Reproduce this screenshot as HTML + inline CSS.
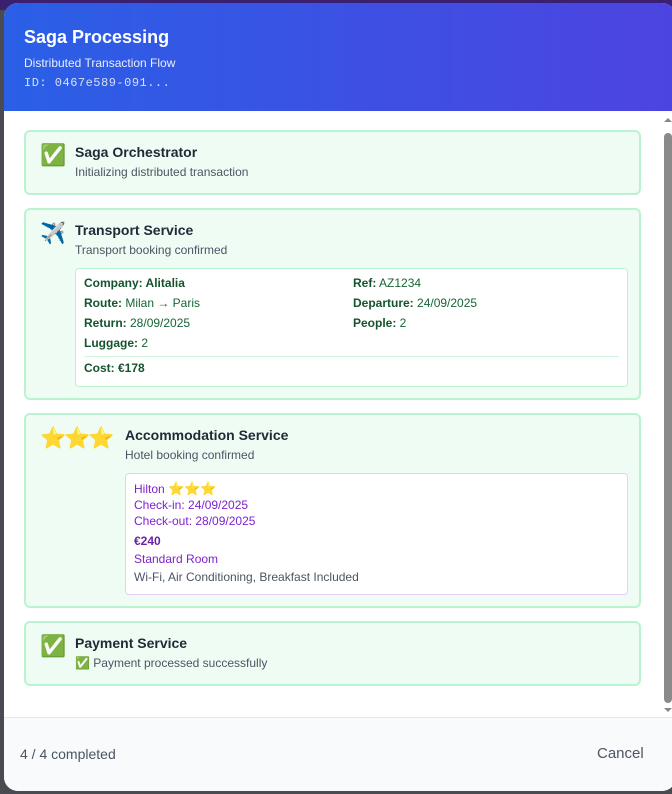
<!DOCTYPE html>
<html><head><meta charset="utf-8"><style>
*{box-sizing:border-box;margin:0;padding:0}
body{width:672px;height:794px;background:#4a4a52;font-family:"Liberation Sans",sans-serif;position:relative;overflow:hidden}
.top{position:absolute;left:0;top:0;width:672px;height:10px;background:#3b1f70}
.modal{position:absolute;left:4px;top:3px;width:672px;height:788px;background:#fff;border-radius:14px;overflow:hidden}
.hdr{height:108px;background:linear-gradient(90deg,#2a5fe6,#4d44e0);color:#fff;padding:24px 20px}
.hdr h1{font-size:18px;font-weight:bold;line-height:20px}
.hdr .s{font-size:12px;margin-top:9px;opacity:.9}
.hdr .id{font-family:"Liberation Mono",monospace;font-size:12px;margin-top:6px;opacity:.8;letter-spacing:.5px}
.card{position:absolute;left:20px;width:617px;background:#effcf3;border:2px solid #bbf2cf;border-radius:6px}
.ic{position:absolute;left:14px;top:12px;font-size:21px;line-height:24px;font-family:"Noto Color Emoji","DejaVu Sans",sans-serif}
.t{position:absolute;left:49px;top:12px;font-size:14px;font-weight:bold;color:#1f2937}
.d{position:absolute;left:49px;top:33px;font-size:12px;color:#4b5563}
.box{position:absolute;background:#fff;border-radius:4px}
.g{color:#166534;font-size:12px;position:absolute}
.g b{font-weight:bold;color:#14532d;font-weight:600}
.p{color:#7e22ce;font-size:12px;position:absolute;left:8px}
.ftr{position:absolute;left:0;top:714px;width:100%;height:80px;background:#f9fafb;border-top:1px solid #e5e7eb}
.sb{position:absolute;left:660px;top:115px;width:8px;height:596px}
</style></head><body>
<div class="top"></div>
<div class="modal">
<div class="hdr"><h1>Saga Processing</h1><div class="s">Distributed Transaction Flow</div><div class="id">ID: 0467e589-091...</div></div>
<div class="sb"><div style="position:absolute;left:0;top:0;width:0;height:0;border:4px solid transparent;border-bottom-color:#888;border-top:0"></div><div style="position:absolute;left:0;top:15px;width:8px;height:570px;background:#8a8a8a;border-radius:4px"></div><div style="position:absolute;left:0;top:590px;width:0;height:0;border:4px solid transparent;border-top-color:#888;border-bottom:0"></div></div>

<div class="card" style="top:127px;height:65px"><div class="ic" style="color:#22c55e">✅</div><div class="t">Saga Orchestrator</div><div class="d">Initializing distributed transaction</div></div>

<div class="card" style="top:205px;height:192px"><div class="ic" style="color:#1e6fb8">✈</div><div class="t">Transport Service</div><div class="d">Transport booking confirmed</div>
<div class="box" style="left:49px;top:58px;width:553px;height:119px;border:1px solid #bbf2cf">
<div class="g" style="left:8px;top:7px"><b>Company: Alitalia</b></div><div class="g" style="left:277px;top:7px"><b>Ref:</b> AZ1234</div>
<div class="g" style="left:8px;top:27px"><b>Route:</b> Milan → Paris</div><div class="g" style="left:277px;top:27px"><b>Departure:</b> 24/09/2025</div>
<div class="g" style="left:8px;top:47px"><b>Return:</b> 28/09/2025</div><div class="g" style="left:277px;top:47px"><b>People:</b> 2</div>
<div class="g" style="left:8px;top:67px"><b>Luggage:</b> 2</div>
<div style="position:absolute;left:8px;right:8px;top:87px;border-top:1px solid #d1f5de"></div>
<div class="g" style="left:8px;top:92px"><b>Cost: €178</b></div></div></div>

<div class="card" style="top:410px;height:195px"><div class="ic" style="color:#facc15;letter-spacing:-2px">⭐⭐⭐</div><div class="t" style="left:99px">Accommodation Service</div><div class="d" style="left:99px">Hotel booking confirmed</div>
<div class="box" style="left:99px;top:58px;width:503px;height:122px;border:1px solid #e3d0fb">
<div class="p" style="top:8px">Hilton <span style="color:#facc15;font-family:'Noto Color Emoji','DejaVu Sans',sans-serif;font-size:13px">⭐⭐⭐</span></div>
<div class="p" style="top:24px">Check-in: 24/09/2025</div>
<div class="p" style="top:40px">Check-out: 28/09/2025</div>
<div class="p" style="top:60px;font-weight:bold;color:#6b21a8">€240</div>
<div class="p" style="top:78px">Standard Room</div>
<div class="p" style="top:96px;color:#4b5563">Wi-Fi, Air Conditioning, Breakfast Included</div></div></div>

<div class="card" style="top:618px;height:65px"><div class="ic" style="color:#22c55e">✅</div><div class="t">Payment Service</div><div class="d"><span style="color:#22c55e">✅</span> Payment processed successfully</div></div>

<div class="ftr"><div style="position:absolute;left:16px;top:28px;font-size:14px;color:#4b5563">4 / 4 completed</div><div style="position:absolute;left:593px;top:27px;font-size:15px;color:#4b5563">Cancel</div></div>
</div>
</body></html>
